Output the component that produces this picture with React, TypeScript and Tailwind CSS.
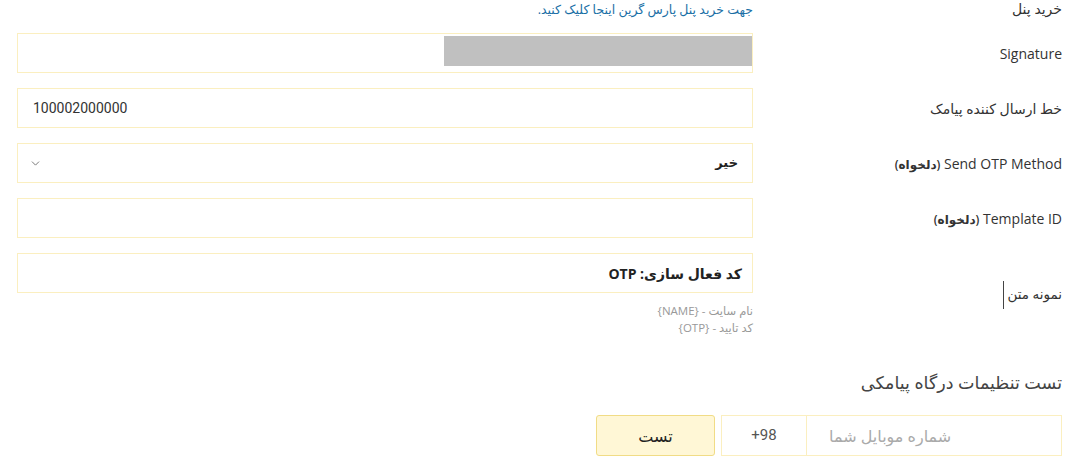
import { ChevronDown } from "lucide-react";

const font = "font-['Open_Sans','DejaVu_Sans',sans-serif]";

function Row({ label, children }: { label: React.ReactNode; children: React.ReactNode }) {
  return (
    <div className="flex items-center">
      <div className="w-[309px] shrink-0 text-[14px] text-[#333]">{label}</div>
      <div className="w-[736px] shrink-0">{children}</div>
    </div>
  );
}

export default function App() {
  return (
    <div dir="rtl" className={`w-[1080px] h-[471px] overflow-hidden bg-white pr-[18px] ${font}`}>
      <div className="flex items-start h-[33px]">
        <div className="w-[309px] shrink-0 text-[14px] leading-[18px] text-[#333]">خرید پنل</div>
        <a className="mt-[1px] text-[12.5px] leading-[18px] text-[#1a6fa6]">جهت خرید پنل پارس گرین اینجا کلیک کنید.</a>
      </div>

      <div className="flex flex-col gap-[15px]">
        <Row label="Signature">
          <div className="relative h-[40px] border border-[#fbefc0] bg-white">
            <div className="absolute right-0 top-[2px] h-[30px] w-[308px] bg-[#c0c0c0]" />
          </div>
        </Row>

        <Row label={<span className="text-[14px]">خط ارسال کننده پیامک</span>}>
          <div dir="ltr" className="flex h-[40px] items-center border border-[#fbefc0] bg-white pl-[15px] font-['Roboto',sans-serif] text-[14px] text-[#333]">
            100002000000
          </div>
        </Row>

        <Row label={<span>Send OTP Method <span className="text-[12px] font-semibold">(دلخواه)</span></span>}>
          <div className="flex h-[40px] items-center justify-between border border-[#fbefc0] bg-white pl-[11px] pr-[14px]">
            <span className="text-[13px] font-bold text-[#222]">خیر</span>
            <ChevronDown className="h-[13px] w-[13px] text-[#777]" strokeWidth={1.8} />
          </div>
        </Row>

        <Row label={<span>Template ID <span className="text-[12px] font-semibold">(دلخواه)</span></span>}>
          <div className="h-[40px] border border-[#fbefc0] bg-white" />
        </Row>

        <Row
          label={
            <span className="flex items-center gap-[3px]">
              <span className="text-[13.5px]">نمونه متن</span>
              <span className="h-[28px] w-px bg-[#444]" />
            </span>
          }
        >
          <div>
            <div className="flex h-[40px] items-center border border-[#fbefc0] bg-white pr-[10px] text-[14px] font-bold text-[#222]">
              کد فعال سازی: OTP
            </div>
            <div className="mt-[9px] text-[11.5px] leading-[17px] text-[#999]">
              <div>نام سایت - {"{NAME}"}</div>
              <div>کد تایید - {"{OTP}"}</div>
            </div>
          </div>
        </Row>
      </div>

      <div className="mt-[34px] text-[17.5px] leading-[24px] text-[#444]">تست تنظیمات درگاه پیامکی</div>

      <div className="mt-[21px] flex items-center gap-[6px]">
        <div className="flex h-[41px] w-[341px] border border-[#fbefc0] bg-white">
          <div dir="ltr" className="flex flex-1 items-center pl-[22px] text-[16px] text-[#aaa]">شماره موبایل شما</div>
          <div dir="ltr" className="flex w-[85px] items-center justify-center border-r border-[#fbefc0] font-['Roboto',sans-serif] text-[15px] text-[#555]">+98</div>
        </div>
        <button className="h-[41px] w-[119px] rounded-[3px] border border-[#f1dc86] bg-[#fff7d6] text-[16px] text-[#222]">
          تست
        </button>
      </div>
    </div>
  );
}
